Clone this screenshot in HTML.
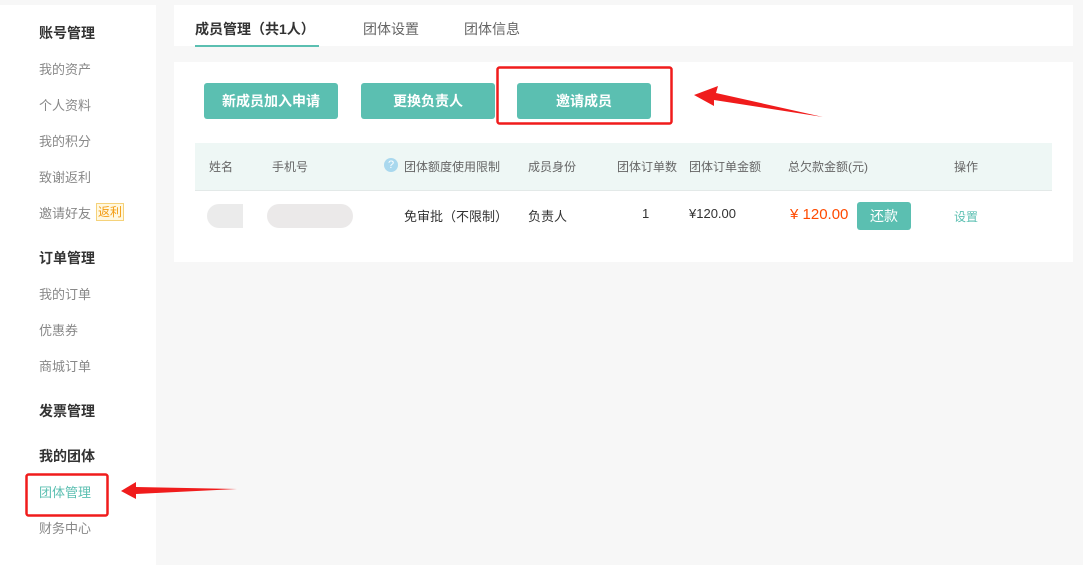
<!DOCTYPE html>
<html><head><meta charset="utf-8">
<style>
*{margin:0;padding:0;box-sizing:border-box}
body{width:1083px;height:557px;background:#f7f7f7;font-family:"Liberation Sans","Noto Sans CJK SC",sans-serif;position:relative;overflow:hidden;color:#333}
.a{position:absolute;white-space:nowrap}
.side{left:0;top:5px;width:156px;height:560px;background:#fff}
.h{left:39px;font-size:14px;font-weight:bold;color:#333}
.i{left:39px;font-size:13px;color:#888}
.btn{top:83px;height:36px;background:#5bbfb1;color:#fff;font-size:14px;font-weight:bold;text-align:center;line-height:36px;border-radius:3px}
.th{top:158px;font-size:12px;color:#666}
.td{top:206px;font-size:13px;color:#333}
</style></head><body>
<div class="a side"></div>
<div class="a h" style="top:23px">账号管理</div>
<div class="a i" style="top:59px">我的资产</div>
<div class="a i" style="top:95px">个人资料</div>
<div class="a i" style="top:131px">我的积分</div>
<div class="a i" style="top:167px">致谢返利</div>
<div class="a i" style="top:203px">邀请好友</div>
<div class="a" style="left:96px;top:203px;width:28px;height:18px;border:1px solid #f5d27a;background:#fff8e0;color:#f39c12;font-size:12px;line-height:16px;text-align:center">返利</div>
<div class="a h" style="top:248px">订单管理</div>
<div class="a i" style="top:284px">我的订单</div>
<div class="a i" style="top:320px">优惠券</div>
<div class="a i" style="top:356px">商城订单</div>
<div class="a h" style="top:401px">发票管理</div>
<div class="a h" style="top:446px">我的团体</div>
<div class="a i" style="top:482px;color:#5bbfb1">团体管理</div>
<div class="a i" style="top:518px">财务中心</div>

<div class="a" style="left:174px;top:5px;width:899px;height:41px;background:#fff"></div>
<div class="a" style="left:195px;top:19px;font-size:14px;font-weight:bold;color:#333">成员管理（共1人）</div>
<div class="a" style="left:195px;top:45px;width:124px;height:2px;background:#5bbfb1"></div>
<div class="a" style="left:363px;top:19px;font-size:14px;color:#666">团体设置</div>
<div class="a" style="left:464px;top:19px;font-size:14px;color:#666">团体信息</div>

<div class="a" style="left:174px;top:62px;width:899px;height:200px;background:#fff"></div>
<div class="a btn" style="left:204px;width:134px">新成员加入申请</div>
<div class="a btn" style="left:361px;width:134px">更换负责人</div>
<div class="a btn" style="left:517px;width:134px">邀请成员</div>

<div class="a" style="left:195px;top:143px;width:857px;height:48px;background:#eef7f5;border-bottom:1px solid #e3e9e8"></div>
<div class="a th" style="left:209px">姓名</div>
<div class="a th" style="left:272px">手机号</div>
<div class="a" style="left:384px;top:158px;width:14px;height:14px;border-radius:50%;background:#a9d8ee;color:#fff;font-size:11px;line-height:14px;text-align:center">?</div>
<div class="a th" style="left:404px">团体额度使用限制</div>
<div class="a th" style="left:528px">成员身份</div>
<div class="a th" style="left:617px">团体订单数</div>
<div class="a th" style="left:689px">团体订单金额</div>
<div class="a th" style="left:788px">总欠款金额(元)</div>
<div class="a th" style="left:954px">操作</div>

<div class="a" style="left:207px;top:204px;width:36px;height:24px;border-radius:12px 0 0 12px;background:#ebebeb"></div>
<div class="a" style="left:267px;top:204px;width:86px;height:24px;border-radius:12px;background:#ebe9e9"></div>
<div class="a td" style="left:404px">免审批（不限制）</div>
<div class="a td" style="left:528px">负责人</div>
<div class="a td" style="left:642px">1</div>
<div class="a td" style="left:689px">¥120.00</div>
<div class="a" style="left:790px;top:206px;font-size:15px;color:#ff4a00">¥ 120.00</div>
<div class="a" style="left:857px;top:202px;width:54px;height:28px;background:#5bbfb1;color:#fff;font-size:14px;line-height:28px;text-align:center;border-radius:3px">还款</div>
<div class="a" style="left:954px;top:208px;font-size:12px;color:#5bbfb1">设置</div>

<svg class="a" style="left:0;top:0" width="1083" height="557">
<rect x="497.5" y="67.5" width="174" height="56" rx="2" fill="none" stroke="#f01c1c" stroke-width="2.5"/>
<rect x="26.5" y="474.5" width="81" height="41" rx="2" fill="none" stroke="#f01c1c" stroke-width="2.5"/>
<polygon points="694,95 718,86 716,93 823,117 714,100 714,106" fill="#f01c1c"/>
<polygon points="121,491 136,482 136,487 237,489 136,494 136,499" fill="#f01c1c"/>
</svg>
</body></html>
